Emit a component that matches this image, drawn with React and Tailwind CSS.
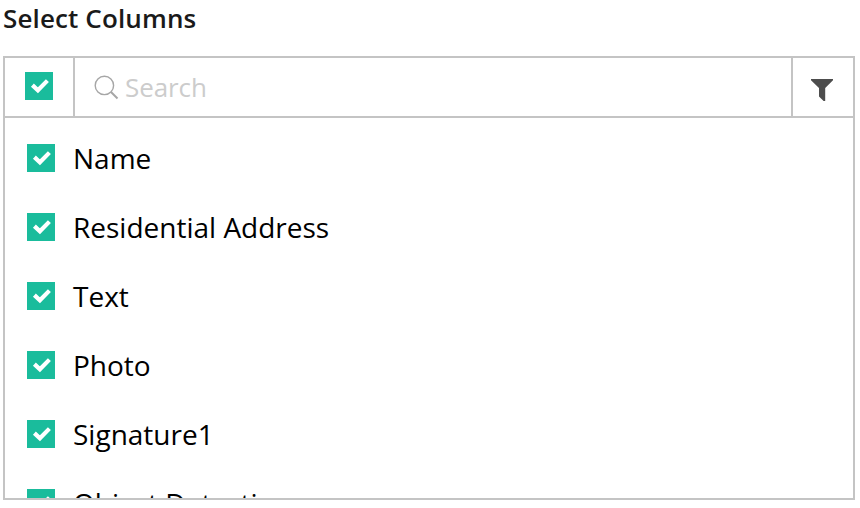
const columns = ['Name', 'Residential Address', 'Text', 'Photo', 'Signature1', 'Object Detection'];

function Checkbox() {
  return (
    <span className="block size-7 shrink-0 bg-[#1abc9c]" role="checkbox" aria-checked="true">
      <svg viewBox="0 0 28 28" className="size-7" fill="none" stroke="#fff" strokeWidth="4.2">
        <path d="M7.4 13.1 L12.9 18.3 L22.4 8.6" />
      </svg>
    </span>
  );
}

export default function App() {
  return (
    <div className="h-[508px] w-[860px] overflow-hidden bg-white pl-[3px] font-['Open_Sans','Noto_Sans',sans-serif]">
      <h1 className="h-14 text-[26px] leading-9 font-semibold tracking-[0.13px] text-[#1a1a1a]">Select Columns</h1>
      <div className="flex h-[444px] w-[852px] flex-col overflow-hidden border-2 border-[#c4c4c4]">
        <div className="flex h-[60px] shrink-0 border-b-2 border-[#c4c4c4]">
          <div className="w-[70px] border-r-2 border-[#c4c4c4] pt-3.5 pl-5">
            <Checkbox />
          </div>
          <div className="flex flex-1 items-center pl-[18px]">
            <svg viewBox="0 0 26 26" className="size-[26px]" fill="none" stroke="#a6a6a6" strokeWidth="1.4">
              <circle cx="11.4" cy="11.4" r="9.2" />
              <path d="M18 18 L24.5 24.5" strokeWidth="1.9" />
            </svg>
            <span className="ml-1.5 text-[26px] leading-9 tracking-[-0.08px] text-[#cccccc]">Search</span>
          </div>
          <div className="w-[62px] border-l-2 border-[#c4c4c4] pt-[21px] pl-[18px]">
            <svg viewBox="0 0 22 22" className="size-[22px]" fill="#4d4d4d">
              <path d="M0 0 H22 V1.3 L14.2 9 V22 H12.6 L8 17.6 V9 L0 1.3 Z" />
            </svg>
          </div>
        </div>
        <ul className="pt-[5px] pl-[22px]">
          {columns.map((name) => (
            <li key={name} className="flex h-[69px] items-center gap-[18px]">
              <Checkbox />
              <span className="text-[28px] leading-10 text-black">{name}</span>
            </li>
          ))}
        </ul>
      </div>
    </div>
  );
}
